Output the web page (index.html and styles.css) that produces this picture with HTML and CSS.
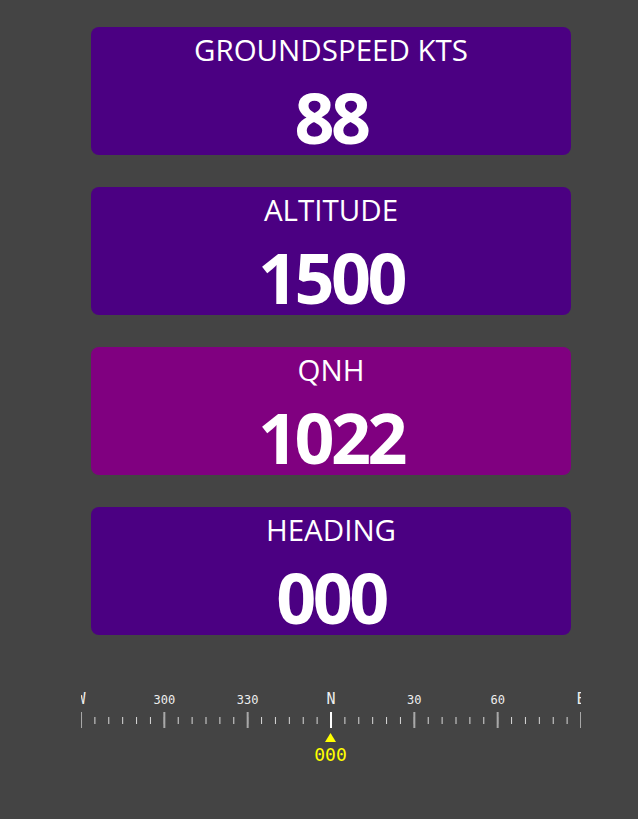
FILE: index.html
```html
<!DOCTYPE html>
<html lang="en">
<head>
  <meta charset="UTF-8" />
  <meta name="viewport" content="width=device-width, initial-scale=1.0" />
  <title>Flight Display</title>
  <link rel="stylesheet" href="styles.css">
</head>
<body>

  <div class="panel">
    <div class="card">
      <div class="label">GROUNDSPEED KTS</div>
      <div class="value">88</div>
    </div>
    <div class="card">
      <div class="label">ALTITUDE</div>
      <div class="value">1500</div>
    </div>
    <div class="card qnh">
      <div class="label">QNH</div>
      <div class="value">1022</div>
    </div>
    <div class="card">
      <div class="label">HEADING</div>
      <div class="value">000</div>
    </div>
  </div>

  <div class="compass">
    <svg width="500" height="100" viewBox="0 0 500 100">
      <defs>
        <pattern id="minor" patternUnits="userSpaceOnUse" x="-0.5" y="0" width="13.8889" height="100">
          <rect x="0" y="37" width="1" height="7" fill="#d8d8d8" />
        </pattern>
        <pattern id="major" patternUnits="userSpaceOnUse" x="-1" y="0" width="83.3333" height="100">
          <rect x="0" y="32" width="2" height="16" fill="#a8a8a8" />
        </pattern>
      </defs>

      <!-- tick marks every 5 deg, long ones every 30 -->
      <rect x="0" y="0" width="500" height="50" fill="url(#minor)" />
      <rect x="0" y="0" width="500" height="50" fill="url(#major)" />
      <rect x="249" y="32" width="2" height="16" fill="#ffffff" />

      <g class="marks">
        <text x="0" y="24" class="cardinal">W</text>
        <text x="83.33" y="24">300</text>
        <text x="166.67" y="24">330</text>
        <text x="250" y="24" class="cardinal">N</text>
        <text x="333.33" y="24">30</text>
        <text x="416.67" y="24">60</text>
        <text x="500" y="24" class="cardinal">E</text>
      </g>

      <polygon points="249.5,53 244,62 255,62" fill="#ffff00" />
      <text x="249.5" y="81" class="readout">000</text>
    </svg>
  </div>

</body>
</html>
```

FILE: styles.css
```css
* {
  margin: 0;
  padding: 0;
  box-sizing: border-box;
}

html, body {
  height: 100%;
  background-color: #444444;
  font-family: 'Open Sans', 'Noto Sans', sans-serif;
  color: #fff;
}

.panel {
  display: flex;
  flex-direction: column;
  gap: 32px;
  width: 480px;
  margin-left: 91px;
  padding-top: 27px;
}

.card {
  height: 128px;
  padding-top: 3px;
  background-color: #4b0082; /* indigo */
  border-radius: 8px;
  display: flex;
  flex-direction: column;
  align-items: center;
}

.card.qnh {
  background-color: #800080;
}

.label {
  font-size: 29.5px;
  line-height: 40px;
  font-weight: 400;
}

.value {
  margin-top: 9px;
  font-size: 70px;
  line-height: 76px;
  font-weight: 700;
  letter-spacing: -3.5px;
}

.compass {
  width: 500px;
  margin-left: 81px;
  margin-top: 45px;
  overflow: hidden;
}

.compass svg {
  display: block;
  overflow: hidden;
}

.marks text {
  font-family: 'DejaVu Sans Mono', monospace;
  font-size: 12px;
  fill: #eeeeee;
  text-anchor: middle;
}

.marks text.cardinal {
  font-size: 15px;
}

.readout {
  font-family: 'DejaVu Sans Mono', monospace;
  font-size: 18px;
  fill: #ffff00;
  text-anchor: middle;
}
```
